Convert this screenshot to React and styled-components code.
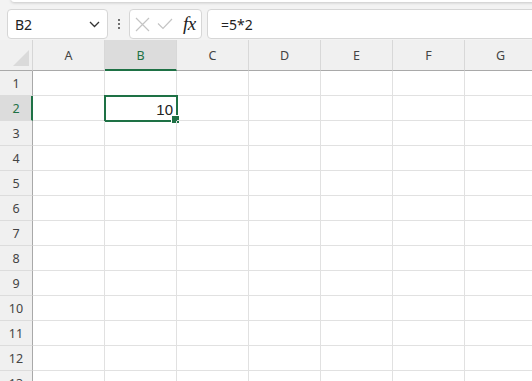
import styled, { createGlobalStyle } from "styled-components";

const GlobalStyle = createGlobalStyle`
  html, body {
    margin: 0;
    padding: 0;
    background: #ffffff;
    overflow: hidden;
  }
  * { box-sizing: border-box; }
`;

const COLS = ["A", "B", "C", "D", "E", "F", "G"];
const ROWS = [1, 2, 3, 4, 5, 6, 7, 8, 9, 10, 11, 12, 13];
const GREEN = "#1e7145";

const Page = styled.div`
  width: 532px;
  height: 381px;
  overflow: hidden;
  font-family: "Noto Sans", "Open Sans", sans-serif;
  background: #fff;
`;

const Bar = styled.div`
  position: relative;
  height: 40px;
  padding: 9px 0 1px 7px;
  background: #f3f3f3;
  display: flex;
  align-items: stretch;
`;

const Ribbon = styled.div`
  position: absolute;
  top: -4px;
  left: 11px;
  right: -10px;
  height: 6px;
  background: #fff;
  border-radius: 4px;
  box-shadow: 0 1px 3px rgba(0, 0, 0, 0.18);
`;

const Box = styled.div`
  background: #fff;
  border: 1px solid #d6d6d6;
  border-radius: 4px;
  display: flex;
  align-items: center;
`;

const NameBox = styled(Box)`
  width: 101px;
  padding: 0 7px 0 7px;
  justify-content: space-between;
  font-size: 14px;
  color: #222;
`;

const Dots = styled.div`
  width: 21px;
  display: flex;
  flex-direction: column;
  align-items: center;
  justify-content: center;
  gap: 2px;

  span {
    width: 2px;
    height: 2px;
    background: #444;
    border-radius: 50%;
  }
`;

const FxBox = styled(Box)`
  width: 73px;
  padding: 0 4px 0 5px;
  gap: 7px;
`;

const Fx = styled.span`
  font-family: "Liberation Serif", "Times New Roman", serif;
  font-style: italic;
  font-weight: 400;
  font-size: 19px;
  color: #222;
  margin-left: 3px;
  letter-spacing: -0.5px;
`;

const Formula = styled(Box)`
  flex: 1;
  margin-left: 5px;
  margin-right: -6px;
  padding-left: 13px;
  font-size: 14px;
  color: #222;
  border-radius: 4px 0 0 4px;
`;

const Sheet = styled.div`
  display: grid;
  grid-template-columns: 33px repeat(7, 72px);
  grid-template-rows: 31px;
  grid-auto-rows: 25px;
`;

const Corner = styled.div`
  background: #f0f0f0;
  border-right: 1px solid #d6d6d6;
  border-bottom: 1px solid #a9a9a9;
  position: relative;

  &::after {
    content: "";
    position: absolute;
    right: 3px;
    bottom: 4px;
    width: 0;
    height: 0;
    border-left: 16px solid transparent;
    border-bottom: 16px solid #dadada;
  }
`;

const ColHead = styled.div`
  background: ${(p) => (p.$active ? "#dcdcdc" : "#f0f0f0")};
  color: ${(p) => (p.$active ? GREEN : "#444")};
  border-right: 1px solid #d8d8d8;
  border-bottom: ${(p) => (p.$active ? `2px solid ${GREEN}` : "1px solid #a9a9a9")};
  font-size: 12.5px;
  display: flex;
  align-items: center;
  justify-content: center;
  padding-top: ${(p) => (p.$active ? "1px" : "0")};
`;

const RowHead = styled.div`
  background: ${(p) => (p.$active ? "#dcdcdc" : "#f0f0f0")};
  color: ${(p) => (p.$active ? GREEN : "#444")};
  border-right: ${(p) => (p.$active ? `2px solid ${GREEN}` : "1px solid #a9a9a9")};
  border-bottom: 1px solid #dcdcdc;
  font-size: 12.5px;
  display: flex;
  align-items: center;
  justify-content: center;
  padding-left: ${(p) => (p.$active ? "1px" : "0")};
`;

const Cell = styled.div`
  position: relative;
  border-right: 1px solid #e1e1e1;
  border-bottom: 1px solid #e1e1e1;
  font-family: "Liberation Sans", Arial, sans-serif;
  font-size: 15px;
  color: #222;
  display: flex;
  align-items: center;
  justify-content: flex-end;
  padding-right: 3px;
  padding-top: 2px;
`;

const Selection = styled.div`
  position: absolute;
  left: -1px;
  top: -1px;
  right: -2px;
  bottom: -2px;
  border: 2px solid ${GREEN};
  pointer-events: none;

  &::after {
    content: "";
    position: absolute;
    right: -4px;
    bottom: -4px;
    width: 7px;
    height: 7px;
    background: ${GREEN};
    border: 1px solid #fff;
  }
`;

const Chevron = () => (
  <svg width="11" height="7" viewBox="0 0 11 7">
    <path d="M1 1l4.5 4.5L10 1" fill="none" stroke="#333" strokeWidth="1.3" />
  </svg>
);

const Cross = () => (
  <svg width="15" height="15" viewBox="0 0 15 15">
    <path d="M1 1l13 13M14 1L1 14" fill="none" stroke="#c4c4c4" strokeWidth="1.2" />
  </svg>
);

const Check = () => (
  <svg width="16" height="12" viewBox="0 0 16 12">
    <path d="M1 5.5l5 5L15 1" fill="none" stroke="#c4c4c4" strokeWidth="1.2" />
  </svg>
);

export default function App() {
  return (
    <Page>
      <GlobalStyle />
      <Bar>
        <Ribbon />
        <NameBox>
          <span>B2</span>
          <Chevron />
        </NameBox>
        <Dots>
          <span />
          <span />
          <span />
        </Dots>
        <FxBox>
          <Cross />
          <Check />
          <Fx>fx</Fx>
        </FxBox>
        <Formula>=5*2</Formula>
      </Bar>
      <Sheet>
        <Corner />
        {COLS.map((c) => (
          <ColHead key={c} $active={c === "B"}>
            {c}
          </ColHead>
        ))}
        {ROWS.map((r) => [
          <RowHead key={`h${r}`} $active={r === 2}>
            {r}
          </RowHead>,
          ...COLS.map((c) => {
            const sel = r === 2 && c === "B";
            return (
              <Cell key={`${c}${r}`}>
                {sel && "10"}
                {sel && <Selection />}
              </Cell>
            );
          }),
        ])}
      </Sheet>
    </Page>
  );
}
